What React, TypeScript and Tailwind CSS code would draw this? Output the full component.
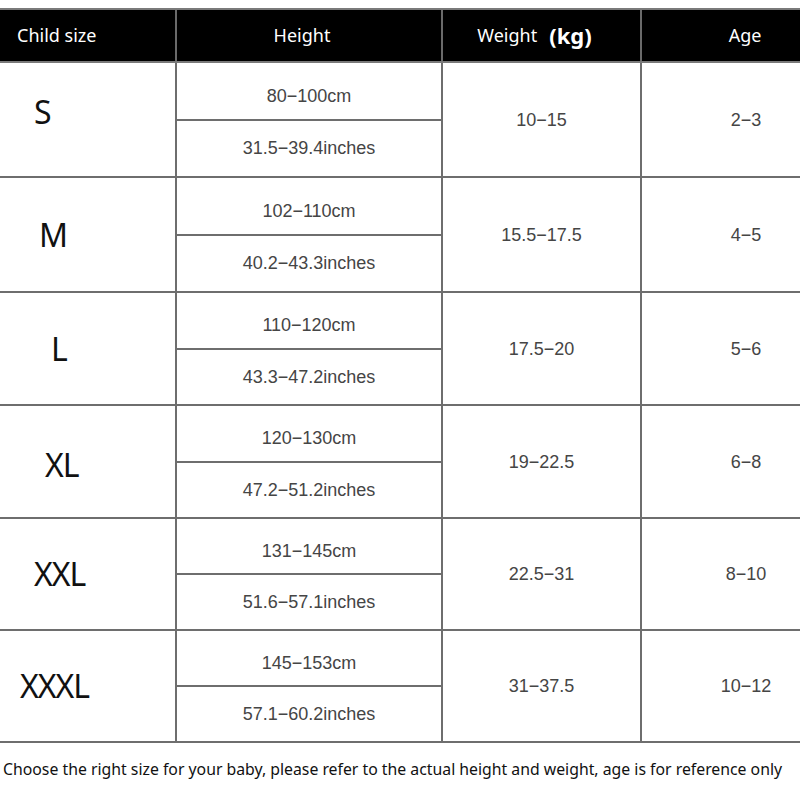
import React from "react";

type SizeRow = {
  size: string;
  pad: string;
  cm: string;
  inch: string;
  weight: string;
  age: string;
  h: string;
};

const rows: SizeRow[] = [
  { size: "S", pad: "pl-[34px] pb-[16px]", cm: "80−100cm", inch: "31.5−39.4inches", weight: "10−15", age: "2−3", h: "h-[115px]" },
  { size: "M", pad: "pl-[39px]", cm: "102−110cm", inch: "40.2−43.3inches", weight: "15.5−17.5", age: "4−5", h: "h-[115px]" },
  { size: "L", pad: "pl-[51px]", cm: "110−120cm", inch: "43.3−47.2inches", weight: "17.5−20", age: "5−6", h: "h-[113px]" },
  { size: "XL", pad: "pl-[45px] pt-[6px]", cm: "120−130cm", inch: "47.2−51.2inches", weight: "19−22.5", age: "6−8", h: "h-[113px]" },
  { size: "XXL", pad: "pl-[34px]", cm: "131−145cm", inch: "51.6−57.1inches", weight: "22.5−31", age: "8−10", h: "h-[112px]" },
  { size: "XXXL", pad: "pl-[20px]", cm: "145−153cm", inch: "57.1−60.2inches", weight: "31−37.5", age: "10−12", h: "h-[112px]" },
];

const cols = "grid grid-cols-[177px_266px_199px_158px]";
const cell = "text-[18px] text-[#454545] leading-none";
const sans = { fontFamily: "'Liberation Sans', Arial, sans-serif" };
const noto = { fontFamily: "'Noto Sans', sans-serif" };

export default function App() {
  return (
    <div className="w-[800px] h-[800px] bg-white flex flex-col">
      <div className="h-2 shrink-0" />

      {/* Header */}
      <div className={`${cols} h-[55px] shrink-0 bg-black border-y-2 border-[#7a7a7a] text-white`} style={noto}>
        <div className="flex items-center pl-[17px] border-r-2 border-[#6a6a6a] text-[18px]">Child size</div>
        <div className="flex items-center justify-center pr-[14px] border-r-2 border-[#6a6a6a] text-[18px]">Height</div>
        <div className="flex items-center justify-center pr-[14px] border-r-2 border-[#6a6a6a] text-[18px] gap-[12px]">
          <span>Weight</span>
          <span className="font-bold text-[22px]">(kg)</span>
        </div>
        <div className="flex items-center justify-center pl-[48px] text-[18px]">Age</div>
      </div>

      {/* Rows */}
      {rows.map(r => (
        <div key={r.size} className={`${cols} ${r.h} shrink-0 border-b-2 border-[#6e6e6e]`}>
          <div className={`flex items-center ${r.pad} border-r-2 border-[#6e6e6e] text-[32px] text-[#111] leading-none tracking-[-1px]`} style={noto}>
            {r.size}
          </div>
          <div className="flex flex-col border-r-2 border-[#6e6e6e]" style={sans}>
            <div className={`flex-1 flex items-center justify-center border-b-2 border-[#6e6e6e] ${cell}`}>
              <span className="mt-[10px]">{r.cm}</span>
            </div>
            <div className={`flex-1 flex items-center justify-center ${cell}`}>{r.inch}</div>
          </div>
          <div className={`flex items-center justify-center border-r-2 border-[#6e6e6e] ${cell}`} style={sans}>
            {r.weight}
          </div>
          <div className={`flex items-center justify-center pl-[50px] ${cell}`} style={sans}>
            {r.age}
          </div>
        </div>
      ))}

      {/* Note */}
      <div className="flex-1 flex items-center pl-[3px] pb-[4px] text-[15.8px] text-[#111] whitespace-nowrap" style={noto}>
        Choose the right size for your baby, please refer to the actual height and weight, age is for reference only
      </div>
    </div>
  );
}
